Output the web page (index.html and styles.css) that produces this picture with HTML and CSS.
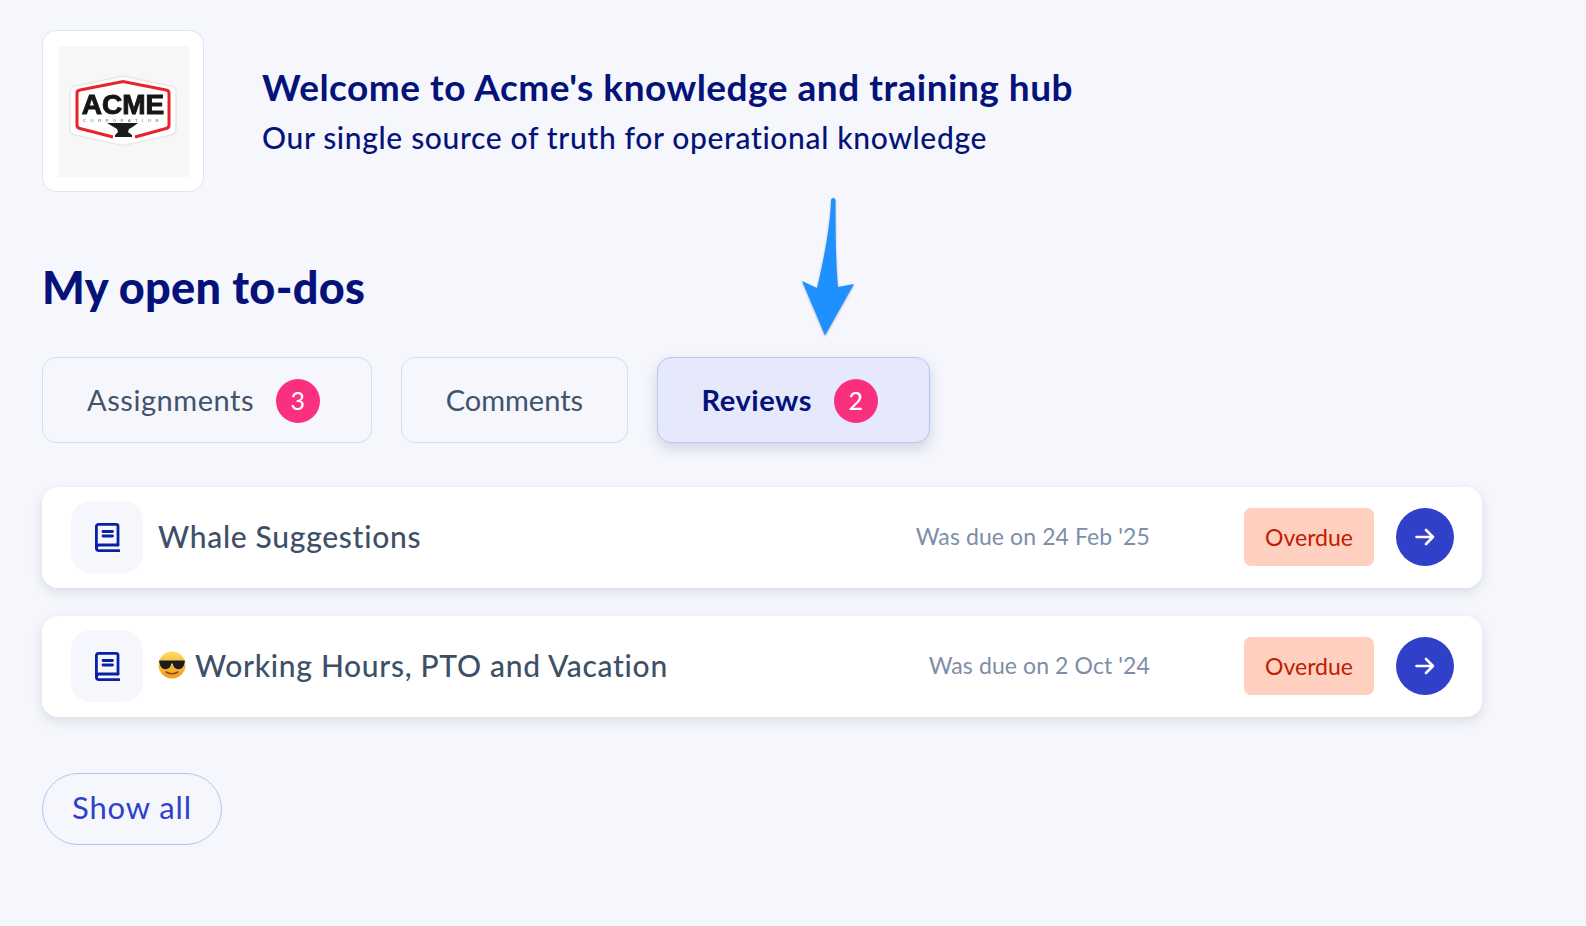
FILE: index.html
```html
<!DOCTYPE html>
<html lang="en">
<head>
    <meta charset="UTF-8">
    <meta name="viewport" content="width=device-width, initial-scale=1.0">
    <title>Acme knowledge hub</title>
    <link rel="stylesheet" href="styles.css">
</head>
<body>

    <div class="container">
        <div class="welcome">
            <div class="logo-card">
                <div class="logo">
                    <div class="logo-badge">
                        <svg class="logo-frame" viewBox="0 0 108 72">
                            <path d="M6 11 L54 1 L102 11 Q107 12 107 17 V54 Q107 59 102 60 L54 70.5 L6 60 Q1 59 1 54 V17 Q1 12 6 11 Z" fill="#fff" stroke="#e8e8e8" stroke-width="1.5"/>
                            <path d="M44 62 L11 53.5 Q8 53 8 50 V18 Q8 15.5 11 15 L54 6.5 L97 15 Q100 15.5 100 18 V50 Q100 53 97 53.5 L66 62" fill="none" stroke="#e8232b" stroke-width="3"/>
                            <path d="M38 48 H69 Q64 52 60 54 L59 57 L63 60 V62 H46 V60 L49 57 L48 54 Q43 51 38 48 Z" fill="#1b1b1b"/>
                        </svg>
                        <span class="logo-name">ACME</span>
                        <span class="logo-sub">CORPORATION</span>
                    </div>
                </div>
            </div>
            <div class="welcome-text">
                <h1>Welcome to Acme's knowledge and training hub</h1>
                <p>Our single source of truth for operational knowledge</p>
            </div>
        </div>

        <h2>My open to-dos</h2>

        <div class="tabs">
            <div class="tab has-count">Assignments <span class="count">3</span></div>
            <div class="tab">Comments</div>
            <div class="tab has-count active">Reviews <span class="count">2</span></div>
            <svg class="pointer" viewBox="0 0 52 140" width="52" height="140">
                <path d="M31 1 C33 1 33.5 2 33.5 5 C33.5 40 34 68 36 90 L52 87 L23 138.5 L0 84 L15 91 C22 62 28 30 29 5 C29 2 29.5 1 31 1 Z" fill="#1e90ff"/>
            </svg>
        </div>

        <div class="todo">
            <div class="todo-icon">
                <svg viewBox="0 0 25 29" width="25" height="29" fill="none" stroke="#0b20a3" stroke-width="2.8" stroke-linecap="round" stroke-linejoin="round">
                    <path d="M23 22 V3 Q23 1.4 21 1.4 H3.5 Q1.4 1.4 1.4 3.5 V25 Q1.4 27.6 4 27.6 H24"/>
                    <path d="M23 22 H4 Q1.4 22 1.4 25"/>
                    <path d="M8 8.5 H17.5 M8 13 H17.5"/>
                </svg>
            </div>
            <div class="todo-title">Whale Suggestions</div>
            <div class="todo-due">Was due on 24 Feb '25</div>
            <div class="status">Overdue</div>
            <div class="go">
                <svg viewBox="0 0 20 18" width="20" height="18" fill="none" stroke="#fff" stroke-width="2.6" stroke-linecap="round" stroke-linejoin="round">
                    <path d="M1.5 9 H18 M11 2 L18 9 L11 16"/>
                </svg>
            </div>
        </div>

        <div class="todo">
            <div class="todo-icon">
                <svg viewBox="0 0 25 29" width="25" height="29" fill="none" stroke="#0b20a3" stroke-width="2.8" stroke-linecap="round" stroke-linejoin="round">
                    <path d="M23 22 V3 Q23 1.4 21 1.4 H3.5 Q1.4 1.4 1.4 3.5 V25 Q1.4 27.6 4 27.6 H24"/>
                    <path d="M23 22 H4 Q1.4 22 1.4 25"/>
                    <path d="M8 8.5 H17.5 M8 13 H17.5"/>
                </svg>
            </div>
            <div class="todo-title">
                <svg class="emoji" viewBox="0 0 28 28" width="28" height="28">
                    <defs>
                        <linearGradient id="face" x1="0" y1="0" x2="0" y2="1">
                            <stop offset="0" stop-color="#fddc62"/>
                            <stop offset="1" stop-color="#f29a1f"/>
                        </linearGradient>
                    </defs>
                    <circle cx="14" cy="14" r="13.5" fill="url(#face)"/>
                    <path d="M1 9.5 H27 L26.5 12 Q25 19 19.5 18 Q15.5 17.5 14.8 12.5 H13.2 Q12.5 17.5 8.5 18 Q3 19 1.5 12 Z" fill="#1c1c1c"/>
                    <path d="M8 21 Q14 24.5 20 21" fill="none" stroke="#8a4b12" stroke-width="1.5" stroke-linecap="round"/>
                </svg>
                Working Hours, PTO and Vacation
            </div>
            <div class="todo-due">Was due on 2 Oct '24</div>
            <div class="status">Overdue</div>
            <div class="go">
                <svg viewBox="0 0 20 18" width="20" height="18" fill="none" stroke="#fff" stroke-width="2.6" stroke-linecap="round" stroke-linejoin="round">
                    <path d="M1.5 9 H18 M11 2 L18 9 L11 16"/>
                </svg>
            </div>
        </div>

        <div class="show-all">Show all</div>
    </div>

</body>
</html>
```

FILE: styles.css
```css
body {
    font-family: "Lato", "Open Sans", sans-serif;
    background-color: #f5f7fc;
    margin: 0;
    height: 926px;
    overflow: hidden;
}

.container {
    width: 1440px;
    padding: 30px 0 0 42px;
}

.welcome {
    display: flex;
    align-items: center;
    gap: 58px;
}

.logo-card {
    width: 162px;
    height: 162px;
    box-sizing: border-box;
    background: #ffffff;
    border: 1px solid #dde5f3;
    border-radius: 14px;
    display: flex;
    align-items: center;
    justify-content: center;
}

.logo {
    width: 131px;
    height: 131px;
    background: #f7f7f8;
    display: flex;
    align-items: center;
    justify-content: center;
}

.logo-badge {
    position: relative;
    width: 108px;
    height: 72px;
    display: flex;
    flex-direction: column;
    align-items: center;
    filter: blur(0.3px);
}

.logo-frame {
    position: absolute;
    inset: 0;
}

.logo-name {
    position: relative;
    margin-top: 17px;
    font-family: "Liberation Sans", sans-serif;
    font-weight: 700;
    font-size: 28px;
    line-height: 26px;
    color: #161616;
    -webkit-text-stroke: 1px #161616;
}

.logo-sub {
    position: relative;
    font-family: "Liberation Sans", sans-serif;
    font-size: 4px;
    line-height: 5px;
    letter-spacing: 4.6px;
    color: #555;
}

.welcome-text {
    color: #04127a;
}

.welcome-text h1 {
    font-size: 37px;
    font-weight: 700;
    letter-spacing: 0.5px;
    line-height: 46px;
    margin: -1px 0 7px;
}

.welcome-text p {
    font-size: 30px;
    font-weight: 500;
    letter-spacing: 0.65px;
    line-height: 40px;
    margin: 0;
}

h2 {
    color: #04127a;
    font-size: 45px;
    font-weight: 900;
    letter-spacing: 0.3px;
    line-height: 56px;
    margin: 67px 0 42px;
}

.tabs {
    position: relative;
    display: flex;
    gap: 28.5px;
    margin-bottom: 44px;
}

.tab {
    height: 86px;
    box-sizing: border-box;
    padding: 0 44px 2px;
    display: flex;
    align-items: center;
    gap: 22px;
    font-size: 29px;
    color: #43536b;
    border: 1px solid #d7dde9;
    border-radius: 14px;
}

.tab.has-count {
    letter-spacing: 0.55px;
}

.tab.active {
    background: #e6e9fc;
    border-color: #b8c4f7;
    color: #04127a;
    font-weight: 700;
    box-shadow: 0 6px 14px rgba(30, 40, 90, 0.16);
}

.count {
    width: 44px;
    height: 44px;
    box-sizing: border-box;
    padding-bottom: 3px;
    margin: 4px 7px 0 0;
    border-radius: 50%;
    background: #f92f80;
    color: #ffffff;
    font-size: 25px;
    font-weight: 400;
    display: flex;
    align-items: center;
    justify-content: center;
}

/* annotation over the page, not part of the tab row */
.pointer {
    position: absolute;
    left: 760px;
    top: -160px;
    filter: drop-shadow(0 1px 1px rgba(40, 50, 60, 0.35));
}

.todo {
    width: 1440px;
    height: 100.5px;
    box-sizing: border-box;
    padding: 0 28px 0 29px;
    margin-bottom: 28.5px;
    background: #ffffff;
    border-radius: 16px;
    box-shadow: 0 4px 12px rgba(30, 40, 70, 0.13);
    display: flex;
    align-items: center;
}

.todo-icon {
    width: 72px;
    height: 72px;
    background: #f5f7fc;
    border-radius: 20px;
    display: flex;
    align-items: center;
    justify-content: center;
    margin-right: 15px;
}

.todo-title {
    flex: 1;
    display: flex;
    align-items: center;
    gap: 9px;
    padding-bottom: 2px;
    font-size: 30px;
    font-weight: 500;
    letter-spacing: 0.7px;
    color: #3e4f68;
}

.todo-due {
    padding-bottom: 2px;
    font-size: 23px;
    letter-spacing: 0.1px;
    color: #7d8ea8;
    margin-right: 94px;
}

.status {
    width: 130px;
    height: 58px;
    box-sizing: border-box;
    padding-bottom: 1px;
    border-radius: 7px;
    background: #ffcfc0;
    color: #bd2102;
    font-size: 23px;
    display: flex;
    align-items: center;
    justify-content: center;
    margin-right: 22px;
}

.go {
    width: 58px;
    height: 58px;
    border-radius: 50%;
    background: #3040c8;
    display: flex;
    align-items: center;
    justify-content: center;
}

.show-all {
    width: 180px;
    height: 72px;
    box-sizing: border-box;
    margin-top: 56.5px;
    padding-bottom: 4px;
    border: 1px solid #b8c4f7;
    border-radius: 36px;
    display: flex;
    align-items: center;
    justify-content: center;
    font-size: 31px;
    letter-spacing: 0.9px;
    color: #3040c8;
}
```
